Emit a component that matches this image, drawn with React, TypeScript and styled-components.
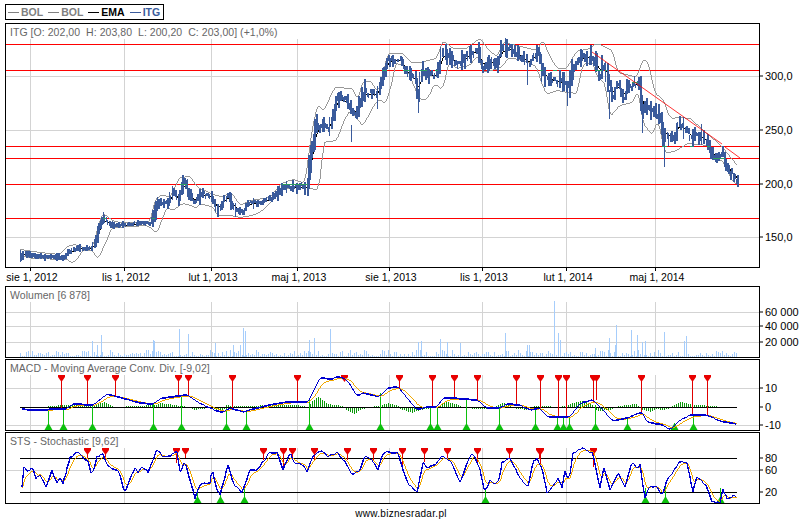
import React from "react"
import styled, { createGlobalStyle } from "styled-components"

type Pt = [number, number]

const GlobalStyle = createGlobalStyle`
  html, body {
    margin: 0;
    background: #fff;
    overflow: hidden;
  }
  body {
    font-family: "Liberation Sans", Arial, sans-serif;
  }
`

const Page = styled.div`
  width: 800px;
  height: 520px;
  padding: 4px 0 0 5px;
  box-sizing: border-box;
  display: flex;
  flex-direction: column;
`
const Legend = styled.div`
  align-self: flex-start;
  display: flex;
  align-items: center;
  gap: 5px;
  width: 159px;
  height: 16px;
  margin-bottom: 3px;
  padding-left: 2px;
  box-sizing: border-box;
  border: 1px solid #000;
`
const LegendItem = styled.span<{ $color: string }>`
  display: flex;
  align-items: center;
  gap: 2px;
  color: ${(p) => p.$color};
  font-size: 10.5px;
  font-weight: bold;
  &::before {
    content: "";
    width: 11px;
    height: 1px;
    background: ${(p) => p.$color};
  }
`
const Row = styled.div<{ $mb?: number }>`
  display: flex;
  margin-bottom: ${(p) => p.$mb ?? 1}px;
`
const PlotBox = styled.div<{ $h: number }>`
  position: relative;
  width: 755px;
  height: ${(p) => p.$h}px;
  box-sizing: border-box;
  border: 1px solid #000;
  svg {
    display: block;
  }
`
const PlotTitle = styled.span`
  position: absolute;
  left: 4px;
  top: 2px;
  color: #666;
  font-size: 10.5px;
  line-height: 13px;
  letter-spacing: 0.05px;
  white-space: pre;
`
const ValueAxis = styled.div`
  position: relative;
  flex: 1;
`
const ValueMark = styled.span<{ $y: number }>`
  position: absolute;
  left: 0;
  top: ${(p) => p.$y}px;
  transform: translateY(-50%);
  display: flex;
  align-items: center;
  gap: 2px;
  font-size: 11px;
  line-height: 13px;
  color: #000;
  white-space: nowrap;
  &::before {
    content: "";
    width: 3px;
    height: 1px;
    background: #000;
  }
`
const DateAxis = styled.div`
  position: relative;
  width: 755px;
  height: 18px;
`
const DateMark = styled.span<{ $x: number }>`
  position: absolute;
  left: ${(p) => p.$x}px;
  top: 3px;
  transform: translateX(-50%);
  font-size: 10.5px;
  line-height: 13px;
  color: #000;
  white-space: nowrap;
`
const DateTick = styled.i<{ $x: number }>`
  position: absolute;
  left: ${(p) => p.$x}px;
  top: 0;
  width: 1px;
  height: 3px;
  background: #000;
`
const Footer = styled.div`
  margin: 3px 0 0;
  width: 792px;
  text-align: center;
  font-size: 10px;
  line-height: 13px;
  letter-spacing: 0.3px;
  color: #000;
`

// page coordinates, the svg viewBox below maps them straight onto the plot
const GRID_X = [30, 124, 211, 297, 389, 482, 566, 655]
const DATES: [string, number][] = [
  ["sie 1, 2012", 30], ["lis 1, 2012", 124], ["lut 1, 2013", 211], ["maj 1, 2013", 297],
  ["sie 1, 2013", 389], ["lis 1, 2013", 482], ["lut 1, 2014", 566], ["maj 1, 2014", 655],
]

const PRICE: Pt[] = [[20,257],[23,253],[33,256],[43,257],[50,256],[63,258],[68,252],[77,248],[90,249],[95,242],[98,228],[103,218],[110,225],[123,225],[140,223],[150,223],[153,217],[157,203],[167,203],[173,192],[178,200],[183,180],[188,193],[193,202],[200,194],[210,196],[217,210],[227,195],[233,208],[242,212],[247,203],[260,203],[270,198],[283,187],[307,187],[309,163],[312,147],[315,127],[322,125],[328,130],[337,97],[347,103],[353,115],[358,108],[363,92],[377,95],[380,80],[387,60],[400,60],[407,75],[415,80],[417,95],[422,70],[433,77],[438,70],[442,52],[450,58],[458,65],[470,52],[477,52],[482,67],[487,62],[498,63],[500,50],[510,48],[518,55],[528,63],[537,52],[540,63],[545,80],[553,80],[560,82],[568,85],[572,70],[578,58],[590,57],[597,63],[597,80],[603,62],[608,83],[612,97],[617,83],[623,98],[627,87],[638,82],[642,110],[645,108],[652,113],[658,115],[663,135],[673,138],[678,123],[685,130],[690,137],[697,135],[705,140],[713,157],[722,153],[727,170],[737,180]]
const UPPER: Pt[] = [[20,249],[40,252],[60,254],[68,246],[75,244],[85,248],[93,246],[100,220],[103,213],[112,220],[120,222],[150,222],[155,200],[162,194],[170,197],[180,177],[190,176],[197,187],[205,190],[215,195],[222,196],[232,193],[240,205],[250,200],[270,197],[282,183],[293,179],[305,183],[312,130],[318,103],[323,112],[335,87],[352,88],[358,100],[362,83],[370,80],[378,92],[382,78],[388,53],[403,53],[410,62],[420,62],[437,58],[443,40],[452,48],[467,48],[480,38],[487,48],[497,57],[503,42],[517,45],[537,50],[543,40],[550,57],[557,68],[567,68],[573,57],[578,50],[588,49],[597,43],[612,50],[618,72],[637,77],[643,59],[648,62],[655,93],[663,99],[670,118],[680,117],[690,118],[703,130],[717,142],[723,148],[737,165]]
const LOWER: Pt[] = [[20,255],[33,258],[67,259],[72,263],[78,258],[83,250],[92,250],[98,259],[107,240],[112,227],[117,227],[147,225],[157,233],[163,217],[167,207],[173,210],[183,203],[190,205],[197,208],[200,203],[213,207],[217,215],[230,215],[240,217],[253,215],[263,210],[270,203],[283,188],[307,187],[318,190],[322,167],[323,142],[337,140],[343,123],[350,110],[363,126],[373,107],[380,98],[385,105],[393,80],[395,63],[405,65],[420,100],[428,98],[435,83],[442,90],[447,73],[448,62],[457,68],[470,65],[478,55],[483,72],[500,68],[510,57],[530,62],[537,68],[543,87],[547,94],[557,90],[567,92],[578,93],[580,73],[585,63],[593,62],[597,77],[605,83],[610,117],[620,105],[633,102],[638,90],[643,123],[652,135],[658,120],[665,153],[677,150],[688,143],[707,145],[715,160],[722,160],[733,182],[737,183]]
const SPIKES: Pt[][] = [[[351,125],[351,142]],[[418,90],[418,113]],[[527,65],[527,85]],[[664,135],[664,167]],[[609,90],[609,119]],[[567,85],[567,106]],[[642,110],[642,133]],[[103,212],[103,224]],[[183,175],[183,190]],[[20,250],[20,262]],[[310,145],[310,180]],[[315,128],[315,150]]]
const GREEN_DASH: number[][] = [[282,308,184],[180,187,184],[103,106,218],[152,155,218],[382,387,70],[403,410,70],[420,427,70],[435,438,70],[540,543,70],[553,557,70],[595,602,70],[605,607,70],[632,638,82],[662,667,146],[690,693,146],[707,710,146],[713,725,158]]

const MACD: Pt[] = [[22,409],[30,410],[67,409],[72,404],[93,405],[107,394],[115,396],[140,403],[153,404],[162,398],[187,395],[203,405],[217,411],[223,412],[230,408],[243,412],[257,408],[270,405],[287,402],[308,402],[320,378],[333,379],[338,376],[347,380],[357,396],[363,393],[380,397],[387,388],[398,387],[417,410],[427,407],[437,407],[443,398],[453,398],[477,400],[487,408],[500,408],[507,404],[520,405],[530,410],[540,408],[547,417],[570,417],[580,403],[593,400],[600,407],[613,421],[627,418],[642,412],[647,422],[663,425],[670,430],[680,420],[690,415],[707,415],[720,421],[737,424]]
const MACD_RED: Pt[] = [[61,408],[87,405],[115,396],[178,397],[188,396],[232,408],[297,401],[344,378],[399,388],[432,407],[454,398],[477,400],[516,404],[540,408],[558,417],[566,417],[593,402],[596,400],[641,412],[692,415],[707,415]]
const MACD_GREEN: Pt[] = [[48,409],[63,408],[92,405],[153,404],[181,397],[226,408],[246,412],[309,398],[380,393],[430,407],[437,407],[466,400],[499,408],[535,408],[557,417],[563,417],[569,417],[595,405],[627,417],[674,423],[693,415]]
const HIST: Pt[] = [[48,1],[68,2],[70,2],[88,3],[92,1],[96,3],[105,5],[112,1],[114,0],[155,2],[160,4],[180,1],[190,0],[195,-2],[200,-1],[212,0],[218,-3],[224,-1],[226,2],[232,1],[248,1],[270,2],[295,2],[308,0],[312,6],[318,10],[328,3],[342,1],[345,-1],[354,-6],[362,-1],[378,1],[388,4],[398,1],[400,-1],[412,-5],[420,-2],[438,1],[446,5],[458,2],[462,0],[480,-1],[490,-1],[497,1],[503,4],[510,1],[516,-1],[530,-2],[533,1],[540,1],[560,0],[570,3],[580,6],[590,4],[597,-3],[610,-2],[618,1],[636,3],[642,-2],[650,-4],[655,-1],[662,-2],[668,-1],[675,3],[680,5],[695,2],[715,1],[720,0]]

const STS: Pt[] = [[22,488],[24,468],[28,472],[32,467],[36,478],[40,474],[46,487],[52,471],[57,483],[60,478],[63,484],[70,458],[77,452],[88,462],[92,476],[97,457],[103,454],[108,467],[118,470],[125,492],[135,467],[138,472],[142,467],[148,472],[157,449],[163,457],[173,454],[177,452],[180,472],[185,462],[195,498],[200,485],[210,483],[212,468],[217,490],[220,495],[228,465],[233,483],[238,488],[242,493],[250,470],[257,470],[270,452],[277,453],[283,470],[290,453],[295,463],[303,465],[307,472],[312,458],[320,450],[328,457],[337,452],[345,462],[352,475],[360,470],[365,455],[372,460],[378,470],[383,452],[398,453],[403,470],[408,483],[417,492],[423,463],[428,468],[437,463],[442,455],[452,463],[460,483],[467,462],[473,452],[480,470],[485,493],[490,480],[495,485],[500,478],[502,462],[510,458],[520,478],[528,487],[533,462],[537,459],[542,468],[547,492],[555,483],[558,478],[562,487],[565,472],[569,481],[573,453],[582,448],[593,453],[597,475],[600,488],[604,468],[610,490],[618,473],[625,487],[632,461],[637,468],[640,465],[645,498],[650,485],[658,488],[662,497],[667,480],[670,476],[680,461],[687,463],[693,492],[697,476],[707,487],[712,502],[720,502],[723,490],[728,500],[734,495],[737,499]]
const STS_RED: Pt[] = [[87,458],[105,461],[176,463],[185,458],[263,460],[283,470],[292,460],[314,460],[347,460],[373,460],[402,467],[424,462],[447,458],[477,462],[509,458],[539,459],[540,465],[593,467]]
const STS_GREEN: Pt[] = [[197,492],[220,490],[244,488],[485,490],[645,488],[665,485],[720,488]]

const VOL_SPIKES: Pt[] = [[26,352],[92,341],[97,345],[101,335],[153,340],[154,341],[179,329],[188,334],[215,343],[233,345],[240,345],[243,328],[245,331],[309,340],[314,338],[330,329],[418,342],[421,341],[440,339],[447,342],[460,343],[505,333],[527,345],[529,345],[554,301],[558,333],[560,340],[595,348],[609,338],[615,345],[616,325],[631,330],[637,335],[642,342],[645,341],[664,332],[684,341],[686,336]]

const seeded = (seed: number) => {
  let s = seed
  return () => {
    s = (s * 16807) % 2147483647
    return s / 2147483647
  }
}
const at = (pts: Pt[], x: number) => {
  for (let i = 1; i < pts.length; i++) {
    if (x <= pts[i][0]) {
      const [x0, y0] = pts[i - 1]
      const [x1, y1] = pts[i]
      return x1 === x0 ? y1 : y0 + ((y1 - y0) * (x - x0)) / (x1 - x0)
    }
  }
  return pts[pts.length - 1][1]
}
const line = (pts: Pt[]) => pts.map((p) => p.join(",")).join(" ")
const first = (pts: Pt[]) => pts[0][0]
const last = (pts: Pt[]) => pts[pts.length - 1][0]

// lagging average, as the signal lines in the indicators
const lagged = (pts: Pt[], alpha: number): Pt[] => {
  const out: Pt[] = []
  let v = pts[0][1]
  for (let x = first(pts); x <= last(pts); x += 1) {
    v += (at(pts, x) - v) * alpha
    out.push([x, Math.round(v)])
  }
  return out
}
// rounds the corners of the hand-read band outlines
const rounded = (pts: Pt[], r: number): Pt[] => {
  const out: Pt[] = []
  for (let x = first(pts); x <= last(pts); x += 1) {
    let sum = 0
    for (let k = -r; k <= r; k++) sum += at(pts, Math.min(last(pts), Math.max(first(pts), x + k)))
    out.push([x, Math.round(sum / (2 * r + 1))])
  }
  return out
}
// the daily wobble the reading points leave out
const rough = (pts: Pt[], amp: number, seed: number): Pt[] => {
  const rnd = seeded(seed)
  const out: Pt[] = []
  for (let x = first(pts); x <= last(pts); x += 1.5) {
    const k = Math.round(x)
    out.push([k, Math.round(at(pts, k) + (rnd() - 0.5) * amp)])
  }
  return out
}

const Trace = ({ pts, color, w = 1 }: { pts: Pt[]; color: string; w?: number }) => (
  <polyline points={line(pts)} fill="none" stroke={color} strokeWidth={w} strokeLinejoin="round" />
)

const Plot = ({ top, height, gridTop, rows, children }: { top: number; height: number; gridTop: number; rows: number[]; children: React.ReactNode }) => (
  <svg width={753} height={height - 2} viewBox={`6 ${top + 1} 753 ${height - 2}`} shapeRendering="crispEdges">
    {rows.map((y) => <line key={y} x1={6} x2={759} y1={y + 0.5} y2={y + 0.5} stroke="#d3d3d3" />)}
    {GRID_X.map((x) => <line key={x} x1={x + 0.5} x2={x + 0.5} y1={gridTop} y2={top + height} stroke="#d3d3d3" />)}
    {children}
  </svg>
)

const Candles = () => {
  const rnd = seeded(4711)
  const bars: React.ReactNode[] = []
  for (let x = 20; x <= 737; x += 1.5) {
    const slope = Math.abs(at(PRICE, x + 2) - at(PRICE, x - 2))
    const vol = x < 150 ? 1.5 : x < 300 ? 3.5 : 6
    const mid = at(PRICE, x) + (rnd() - 0.5) * vol
    const r = rnd()
    const h = 3 + slope * 0.6 + r * r * r * vol * 3
    bars.push(<rect key={x} x={Math.round(x)} y={Math.round(mid - h / 2)} width={rnd() > 0.2 ? 2 : 1} height={Math.round(h)} fill="#3a5b9c" />)
  }
  return <>{bars}</>
}

const Volume = () => {
  const rnd = seeded(90210)
  const bars: React.ReactNode[] = []
  for (let x = 20; x <= 737; x += 2) {
    const r = rnd()
    const h = r < 0.2 ? 1 : 1 + r * r * 6
    bars.push(<rect key={x} x={x} y={357 - Math.round(h)} width={1} height={Math.round(h)} fill="#a6cdfb" />)
  }
  VOL_SPIKES.forEach(([x, y]) => bars.push(<rect key={"s" + x} x={x} y={y} width={1} height={357 - y} fill="#a6cdfb" />))
  return <>{bars}</>
}

const Histogram = () => {
  const bars: React.ReactNode[] = []
  for (let x = 48; x <= 720; x += 2) {
    const h = Math.round(at(HIST, x))
    if (h !== 0) bars.push(<rect key={x} x={x} y={h > 0 ? 407 - h : 408} width={1} height={Math.abs(h)} fill="#0b9a0b" />)
  }
  return <>{bars}</>
}

const SignalDown = ({ x, y, top }: { x: number; y: number; top: number }) => (
  <g>
    <line x1={x + 0.5} x2={x + 0.5} y1={top + 4} y2={y} stroke="#e00000" />
    <polygon points={`${x - 3},${top} ${x + 4},${top} ${x + 4},${top + 2} ${x + 0.5},${top + 7} ${x - 3},${top + 2}`} fill="#e80000" shapeRendering="auto" />
  </g>
)
const SignalUp = ({ x, y, bottom }: { x: number; y: number; bottom: number }) => (
  <g>
    <line x1={x + 0.5} x2={x + 0.5} y1={y} y2={bottom - 4} stroke="#0cc00c" />
    <polygon points={`${x + 0.5},${bottom - 7} ${x + 4.5},${bottom} ${x - 3.5},${bottom}`} fill="#0cc00c" shapeRendering="auto" />
  </g>
)

const ValueLabels = ({ top, marks }: { top: number; marks: [string, number][] }) => (
  <ValueAxis>
    {marks.map(([t, y]) => <ValueMark key={t} $y={y - top}>{t}</ValueMark>)}
  </ValueAxis>
)

const App = (): JSX.Element => (
  <Page>
    <GlobalStyle />
    <Legend>
      <LegendItem $color="#808080">BOL</LegendItem>
      <LegendItem $color="#808080">BOL</LegendItem>
      <LegendItem $color="#000">EMA</LegendItem>
      <LegendItem $color="#3a5b9c">ITG</LegendItem>
    </Legend>

    <Row $mb={0}>
      <PlotBox $h={245}>
        <Plot top={23} height={245} gridTop={39} rows={[76, 130, 184, 237]}>
          {[44, 70, 146, 158, 184, 218].map((y) => <line key={y} x1={6} x2={759} y1={y + 0.5} y2={y + 0.5} stroke="#ff0000" />)}
          <Trace pts={rounded(UPPER, 2)} color="#989898" />
          <Trace pts={rounded(LOWER, 2)} color="#989898" />
          <Trace pts={lagged(PRICE, 0.3)} color="#000" />
          <Candles />
          {SPIKES.map(([a, b]) => <line key={a[0]} x1={a[0] + 0.5} x2={b[0] + 0.5} y1={a[1]} y2={b[1]} stroke="#3a5b9c" />)}
          {GREEN_DASH.map(([a, b, y]) => <line key={a} x1={a} x2={b} y1={y + 0.5} y2={y + 0.5} stroke="#2e9e5e" />)}
          <polyline points="592,52 722,144" fill="none" stroke="#ff0000" strokeWidth={0.8} shapeRendering="auto" />
          <polyline points="725,147 740,158" fill="none" stroke="#ff0000" strokeWidth={0.8} shapeRendering="auto" />
        </Plot>
        <PlotTitle>ITG [O: 202,00  H: 203,80  L: 200,20  C: 203,00] (+1,0%)</PlotTitle>
      </PlotBox>
      <ValueLabels top={23} marks={[["300,0", 76], ["250,0", 130], ["200,0", 184], ["150,0", 237]]} />
    </Row>

    <DateAxis>
      {DATES.map(([t, x]) => (
        <React.Fragment key={t}>
          <DateTick $x={x - 5} />
          <DateMark $x={x - 3}>{t}</DateMark>
        </React.Fragment>
      ))}
    </DateAxis>

    <Row>
      <PlotBox $h={72}>
        <Plot top={286} height={72} gridTop={302} rows={[312, 326, 342]}>
          <Volume />
        </Plot>
        <PlotTitle>Wolumen [6 878]</PlotTitle>
      </PlotBox>
      <ValueLabels top={286} marks={[["60 000", 312], ["40 000", 326], ["20 000", 342]]} />
    </Row>

    <Row>
      <PlotBox $h={72}>
        <Plot top={359} height={72} gridTop={375} rows={[388, 425]}>
          <line x1={20} x2={737} y1={407.5} y2={407.5} stroke="#000" />
          <Histogram />
          {MACD_RED.map(([x, y]) => <SignalDown key={x} x={x} y={y} top={375} />)}
          {MACD_GREEN.map(([x, y]) => <SignalUp key={x} x={x} y={y} bottom={430} />)}
          <Trace pts={lagged(MACD, 0.15)} color="#f0a800" />
          <Trace pts={rough(rounded(MACD, 2), 0.8, 31)} color="#0000d0" w={1.3} />
        </Plot>
        <PlotTitle>MACD - Moving Average Conv. Div. [-9,02]</PlotTitle>
      </PlotBox>
      <ValueLabels top={359} marks={[["10", 388], ["0", 407], ["-10", 425]]} />
    </Row>

    <Row $mb={0}>
      <PlotBox $h={72}>
        <Plot top={432} height={72} gridTop={448} rows={[470]}>
          <line x1={20} x2={737} y1={458.5} y2={458.5} stroke="#000" />
          <line x1={20} x2={737} y1={492.5} y2={492.5} stroke="#000" />
          {STS_RED.map(([x, y]) => <SignalDown key={x} x={x} y={y} top={448} />)}
          {STS_GREEN.map(([x, y]) => <SignalUp key={x} x={x} y={y} bottom={503} />)}
          <Trace pts={lagged(STS, 0.22)} color="#f0a800" />
          <Trace pts={rough(STS, 2, 77)} color="#0000d0" w={1.3} />
        </Plot>
        <PlotTitle>STS - Stochastic [9,62]</PlotTitle>
      </PlotBox>
      <ValueLabels top={432} marks={[["80", 458], ["60", 470], ["20", 492]]} />
    </Row>

    <Footer>www.biznesradar.pl</Footer>
  </Page>
)

export default App
